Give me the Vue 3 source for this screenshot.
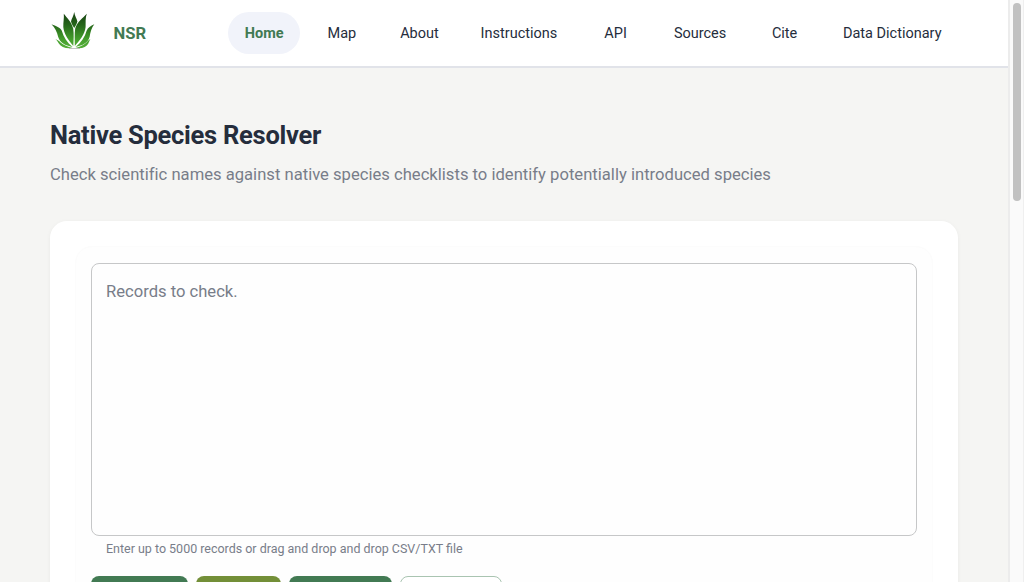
<template>
  <div class="page">
    <div class="content">
      <header class="navbar">
        <a class="brand">
          <svg class="logo" viewBox="0 0 50 48">
            <defs>
              <linearGradient id="leaf" gradientUnits="userSpaceOnUse" x1="0" y1="6" x2="0" y2="42">
                <stop offset="0" stop-color="#173f12" />
                <stop offset="0.35" stop-color="#25651a" />
                <stop offset="0.75" stop-color="#439d2b" />
                <stop offset="1" stop-color="#55ae38" />
              </linearGradient>
            </defs>
            <g fill="url(#leaf)">
              <path d="M26.2 6C26.8 10 28.8 12.5 29.4 15.5C28.8 18 27.5 20 26.2 22C25 20 23.6 18 23 15.5C23.6 12.5 25.6 10 26.2 6Z" />
              <path d="M15.8 7.8C19 12 23.5 16 25.2 22.5C26 28 25.6 34 25.3 40C20.5 34 15.8 28 15.3 21C15.2 16.5 16.2 12 15.8 7.8Z" />
              <path d="M38.8 7.8C35 12 29 16 27.2 22.5C26.4 28 26.8 34 26.8 40C32 34 37 28 37.6 21C37.8 16.5 37.2 12 38.8 7.8Z" />
              <path d="M3.5 18.3C8 20 12.3 21.5 13.8 24.8C15.5 31 19 36.5 24.6 41C17 39.5 12 36.5 10.2 31C9 26 7 21.5 3.5 18.3Z" />
              <path d="M46.3 18.3C42.5 20 40 21.5 38.6 24.8C37 31 33.2 36.5 27.5 41C35 39.5 40 36.5 41.6 31C42.5 26 43.5 21.5 46.3 18.3Z" />
              <path d="M7.3 33C9.5 34 11 34.5 12.5 36.5C15.5 39.3 20 40.8 24.5 42C18 43 13 41 11 37.8C10 35.8 9 34.3 7.3 33Z" />
              <path d="M42.5 33C40.8 34 39.7 34.8 38.5 36.5C35.8 39.3 32 40.8 27.5 42C34 43 38.5 41 40.2 37.8C41 35.8 41.5 34.3 42.5 33Z" />
            </g>
            <path d="M21 42.5H32" stroke="#b8b8b8" stroke-width="0.8" />
          </svg>
          <span class="brand-name">NSR</span>
        </a>
        <nav class="links">
          <a
            v-for="item in links"
            :key="item"
            :class="['link', { active: item === current }]"
            @click="current = item"
          >{{ item }}</a>
        </nav>
      </header>

      <main class="main">
        <h1 class="title">Native Species Resolver</h1>
        <p class="subtitle">
          Check scientific names against native species checklists to identify potentially introduced species
        </p>
        <section class="card">
          <div class="panel">
            <textarea v-model="records" class="records" placeholder="Records to check."></textarea>
            <p class="helper">Enter up to 5000 records or drag and drop and drop CSV/TXT file</p>
            <div class="actions">
              <button class="btn submit"></button>
              <button class="btn clear"></button>
              <button class="btn upload"></button>
              <button class="btn outlined"></button>
            </div>
          </div>
        </section>
      </main>
    </div>
    <div class="scroll-track">
      <div class="scroll-thumb"></div>
    </div>
  </div>
</template>

<script setup>
import { ref } from 'vue'

const links = ['Home', 'Map', 'About', 'Instructions', 'API', 'Sources', 'Cite', 'Data Dictionary']
const current = ref('Home')
const records = ref('')
</script>

<style>
body {
  margin: 0;
  overflow: hidden;
}
</style>

<style scoped>
.page {
  display: flex;
  height: 582px;
  overflow: hidden;
  background: #f5f5f3;
  font-family: Roboto, "Liberation Sans", sans-serif;
  color: #252d3c;
}

.content {
  flex: 1;
  min-width: 0;
}

.navbar {
  display: flex;
  align-items: center;
  justify-content: space-between;
  box-sizing: border-box;
  height: 68px;
  padding: 0 50px 0 47.5px;
  background: #fff;
  border-bottom: 2px solid #e1e3e9;
}

.brand {
  display: flex;
  align-items: center;
  gap: 16px;
}

.logo {
  width: 50px;
  height: 48px;
  margin-bottom: 6px;
}

.brand-name {
  font-size: 16.6px;
  font-weight: 700;
  color: #427a53;
}

.links {
  display: flex;
  gap: 8.8px;
}

.link {
  box-sizing: border-box;
  min-width: 66px;
  height: 42px;
  padding: 0 16.5px;
  border-radius: 21px;
  font-size: 14.5px;
  line-height: 43px;
  text-align: center;
  white-space: nowrap;
  cursor: pointer;
}

.link.active {
  background: #f1f3fa;
  color: #427a53;
  font-weight: 700;
}

.main {
  padding: 49px 50px 0;
}

.title {
  margin: 0;
  font-size: 25.5px;
  line-height: 36px;
  font-weight: 700;
  letter-spacing: -0.26px;
}

.subtitle {
  margin: 9px 0 33px;
  font-size: 16.6px;
  line-height: 26px;
  letter-spacing: 0.01px;
  color: #787d89;
  white-space: nowrap;
}

.card {
  height: 400px;
  padding: 25px;
  box-sizing: border-box;
  border-radius: 17px;
  background: #fff;
  box-shadow: 0 1px 4px rgba(0, 0, 0, 0.05);
}

.panel {
  height: 400px;
  padding: 15.5px 15.5px 15px 15px;
  box-sizing: border-box;
  border: 1px solid #fcfcfc;
  border-radius: 17px;
  background: #fefefe;
}

.records {
  display: block;
  box-sizing: border-box;
  width: 100%;
  height: 273px;
  padding: 16.5px 14px;
  border: 1px solid #c6c7c8;
  border-radius: 8px;
  outline: none;
  resize: none;
  background: #fefefe;
  font: 16.6px/24px Roboto, "Liberation Sans", sans-serif;
}

.records::placeholder {
  color: #787d89;
}

.helper {
  margin: 3px 15px 0;
  font-size: 12.48px;
  line-height: 20px;
  color: #787d89;
}

.actions {
  display: flex;
  gap: 8px;
  margin-top: 17.5px;
}

.btn {
  height: 38px;
  padding: 0;
  border: 0;
  border-radius: 8px;
}

.submit {
  width: 97px;
  background: #427a53;
}

.clear {
  width: 85px;
  background: #738f38;
}

.upload {
  width: 103px;
  background: #427a53;
}

.outlined {
  width: 102px;
  border: 1px solid #a9c4b1;
  background: #fff;
}

.scroll-track {
  box-sizing: border-box;
  width: 16px;
  padding: 3px 0 0 2.5px;
  border-left: 2px solid #ececec;
  border-right: 1px solid #efefef;
  background: #fafafa;
}

.scroll-thumb {
  width: 8px;
  height: 198px;
  border-radius: 4px;
  background: #c1c1c1;
}
</style>
